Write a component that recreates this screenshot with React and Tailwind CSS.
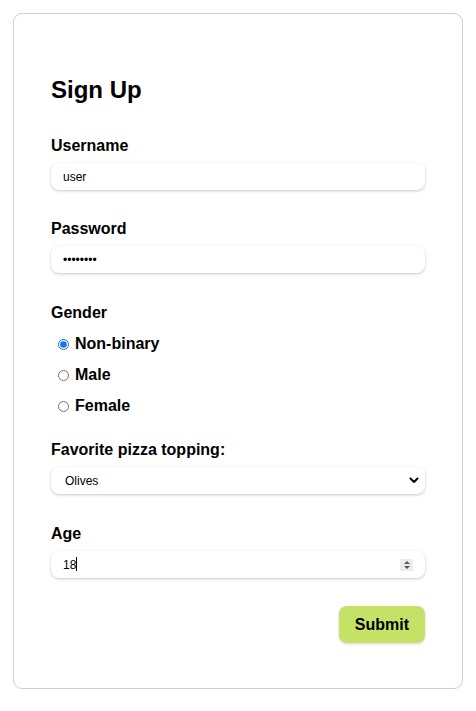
/**
 * Sign up form
 */
function Field({ label, children, className = '' }) {
  return (
    <div className={className}>
      <label className="block text-[16px] leading-[20px] font-bold mb-[7px]">{label}</label>
      {children}
    </div>
  )
}

const inputCls =
  'block w-full h-[27px] rounded-[8px] bg-white pl-[12px] pr-[10px] text-[12px] text-black outline-none shadow-[0_1px_3px_rgba(0,0,0,0.22)]'

export default function App() {
  const genders = ['Non-binary', 'Male', 'Female']

  return (
    <div className="min-h-[711px] bg-white p-[13px]" style={{ fontFamily: '"Liberation Sans", Arial, sans-serif' }}>
      <form
        onSubmit={(e) => e.preventDefault()}
        className="w-[450px] h-[676px] border border-[#cfcfcf] rounded-[9px] bg-white pl-[37px] pr-[37px] pt-[62px] text-black"
      >
        <h1 className="text-[24px] leading-[28px] font-bold">Sign Up</h1>

        <Field label="Username" className="mt-[32px]">
          <input type="text" defaultValue="user" className={inputCls} />
        </Field>

        <Field label="Password" className="mt-[29px]">
          <input type="text" defaultValue="••••••••" className={inputCls} />
        </Field>

        <div className="mt-[30px]">
          <div className="text-[16px] leading-[20px] font-bold">Gender</div>
          <div className="mt-[11px] flex flex-col gap-[11px]">
            {genders.map((g, i) => (
              <label key={g} className="flex items-center h-[20px] text-[16px] font-bold">
                <input
                  type="radio"
                  name="gender"
                  defaultChecked={i === 0}
                  className="w-[11px] h-[11px] ml-[7px] mr-[6px] accent-[#1a73e8]"
                />
                {g}
              </label>
            ))}
          </div>
        </div>

        <Field label="Favorite pizza topping:" className="mt-[24px]">
          <div className="relative">
            <select defaultValue="Olives" className={inputCls + ' appearance-none pl-[14px]'}>
              <option>Pepperoni</option>
              <option>Mushrooms</option>
              <option>Olives</option>
            </select>
            <svg
              className="absolute right-[6px] top-[9px] w-[10px] h-[9px] pointer-events-none"
              viewBox="0 0 10 9"
              fill="none"
              stroke="#000"
              strokeWidth="2"
              strokeLinecap="round"
              strokeLinejoin="round"
            >
              <path d="M1.5 2.5 L5 6 L8.5 2.5" />
            </svg>
          </div>
        </Field>

        <Field label="Age" className="mt-[30px]">
          <div className="relative">
            <input type="text" defaultValue="18" className={inputCls} />
            <span className="absolute left-[25px] top-[6px] w-px h-[14px] bg-black" />
            <span className="absolute right-[12px] top-[8px] w-[13px] h-[12px] bg-[#ececec] flex flex-col items-center justify-center gap-[2px]">
              <svg viewBox="0 0 6 3" className="w-[6px] h-[3px]">
                <path d="M0 3 L3 0 L6 3 Z" fill="#555" />
              </svg>
              <svg viewBox="0 0 6 3" className="w-[6px] h-[3px]">
                <path d="M0 0 L3 3 L6 0 Z" fill="#555" />
              </svg>
            </span>
          </div>
        </Field>

        <div className="mt-[28px] flex justify-end">
          <button
            type="submit"
            className="h-[37px] px-[16px] rounded-[8px] bg-[#c5e267] text-[16px] font-bold text-black shadow-[0_1px_3px_rgba(0,0,0,0.18)]"
          >
            Submit
          </button>
        </div>
      </form>
    </div>
  )
}
